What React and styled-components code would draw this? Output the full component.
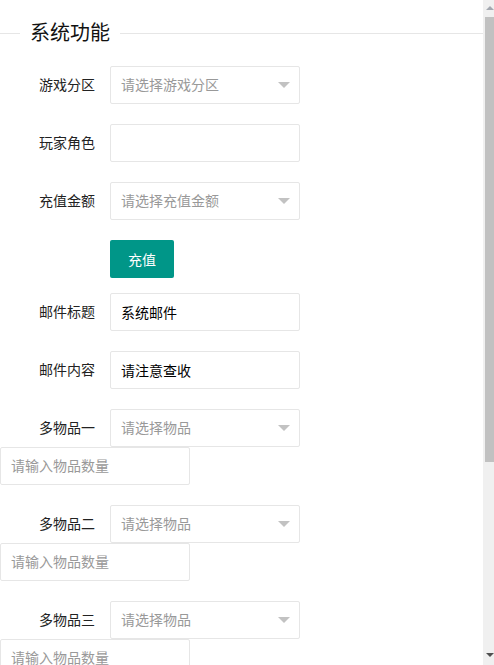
import React from 'react'
import styled, { createGlobalStyle } from 'styled-components'

const GlobalStyle = createGlobalStyle`
  html, body {
    margin: 0;
    padding: 0;
    background: #fff;
  }
  body {
    font-family: "Liberation Sans", "Noto Sans CJK SC", sans-serif;
    font-size: 14px;
    color: #222;
  }
`

const ScrollRail = styled.div`
  position: fixed;
  top: 0;
  right: 0;
  width: 11px;
  height: 100vh;
  background: #f0f0f0;
  display: flex;
  flex-direction: column;
`

const RailButton = styled.div`
  height: 17px;
  margin-left: 2px;
  display: flex;
  justify-content: center;
  align-items: ${p => (p.down ? 'flex-end' : 'flex-start')};
  padding: ${p => (p.down ? '0 0 8px' : '6px 0 0')};
  box-sizing: border-box;

  &::after {
    content: '';
    border-left: 4px solid transparent;
    border-right: 4px solid transparent;
    ${p =>
      p.down
        ? 'border-top: 4px solid #505050;'
        : 'border-bottom: 4px solid #a3a8b0;'}
  }
`

const RailThumb = styled.div`
  height: 445px;
  margin-left: 2px;
  background: #c1c1c1;
`

const RailSpace = styled.div`
  flex: 1;
`

const Page = styled.div`
  padding-right: 11px;
`

const TitleBar = styled.div`
  display: flex;
  align-items: center;
  height: 28px;
  margin: 19px 0 19px;

  &::before,
  &::after {
    content: '';
    border-top: 1px solid #e6e6e6;
  }
  &::before {
    width: 20px;
  }
  &::after {
    flex: 1;
  }
`

const TitleText = styled.span`
  padding: 0 10px;
  font-size: 20px;
  line-height: 28px;
  color: #111;
`

const FormItem = styled.div`
  display: flex;
  flex-wrap: wrap;
  margin-bottom: ${p => p.gap ?? 20}px;
  padding-left: ${p => (p.indent ? 110 : 0)}px;
`

const Label = styled.label`
  box-sizing: border-box;
  width: 110px;
  padding: 9px 15px;
  line-height: 20px;
  text-align: right;
  color: #222;
`

const Input = styled.input`
  box-sizing: border-box;
  width: 190px;
  height: 38px;
  padding: 0 10px;
  border: 1px solid #e6e6e6;
  border-radius: 2px;
  background: #fff;
  font: inherit;
  font-size: 14px;
  color: #000;
  outline: none;

  &::placeholder {
    color: #999;
  }
`

const QtyInput = styled(Input)`
  display: block;
`

const SelectBox = styled.div`
  position: relative;
  box-sizing: border-box;
  width: 190px;
  height: 38px;
  padding: 0 10px;
  border: 1px solid #e6e6e6;
  border-radius: 2px;
  line-height: 36px;
  color: #999;
  cursor: pointer;
`

const Arrow = styled.i`
  position: absolute;
  right: 9px;
  top: 50%;
  margin-top: -3px;
  width: 0;
  height: 0;
  border-left: 6px solid transparent;
  border-right: 6px solid transparent;
  border-top: 6px solid #c2c2c2;
`

const Button = styled.button`
  width: 64px;
  height: 38px;
  padding: 0;
  border: none;
  border-radius: 2px;
  background: #009688;
  color: #fff;
  font: inherit;
  font-size: 14px;
  cursor: pointer;
`

const Select = ({ placeholder }) => (
  <SelectBox>
    {placeholder}
    <Arrow />
  </SelectBox>
)

const items = ['一', '二', '三', '四', '五']

export default function App() {
  return (
    <>
      <GlobalStyle />
      <Page>
        <TitleBar>
          <TitleText>系统功能</TitleText>
        </TitleBar>

        <FormItem>
          <Label>游戏分区</Label>
          <Select placeholder="请选择游戏分区" />
        </FormItem>
        <FormItem>
          <Label>玩家角色</Label>
          <Input />
        </FormItem>
        <FormItem>
          <Label>充值金额</Label>
          <Select placeholder="请选择充值金额" />
        </FormItem>
        <FormItem indent gap={15}>
          <Button>充值</Button>
        </FormItem>

        <FormItem>
          <Label>邮件标题</Label>
          <Input defaultValue="系统邮件" />
        </FormItem>
        <FormItem>
          <Label>邮件内容</Label>
          <Input defaultValue="请注意查收" />
        </FormItem>

        {items.map(n => (
          <div key={n}>
            <FormItem gap={0}>
              <Label>多物品{n}</Label>
              <Select placeholder="请选择物品" />
            </FormItem>
            <FormItem>
              <QtyInput placeholder="请输入物品数量" />
            </FormItem>
          </div>
        ))}

        <FormItem indent gap={16}>
          <Button>发送</Button>
        </FormItem>
      </Page>

      <ScrollRail>
        <RailButton />
        <RailThumb />
        <RailSpace />
        <RailButton down />
      </ScrollRail>
    </>
  )
}
